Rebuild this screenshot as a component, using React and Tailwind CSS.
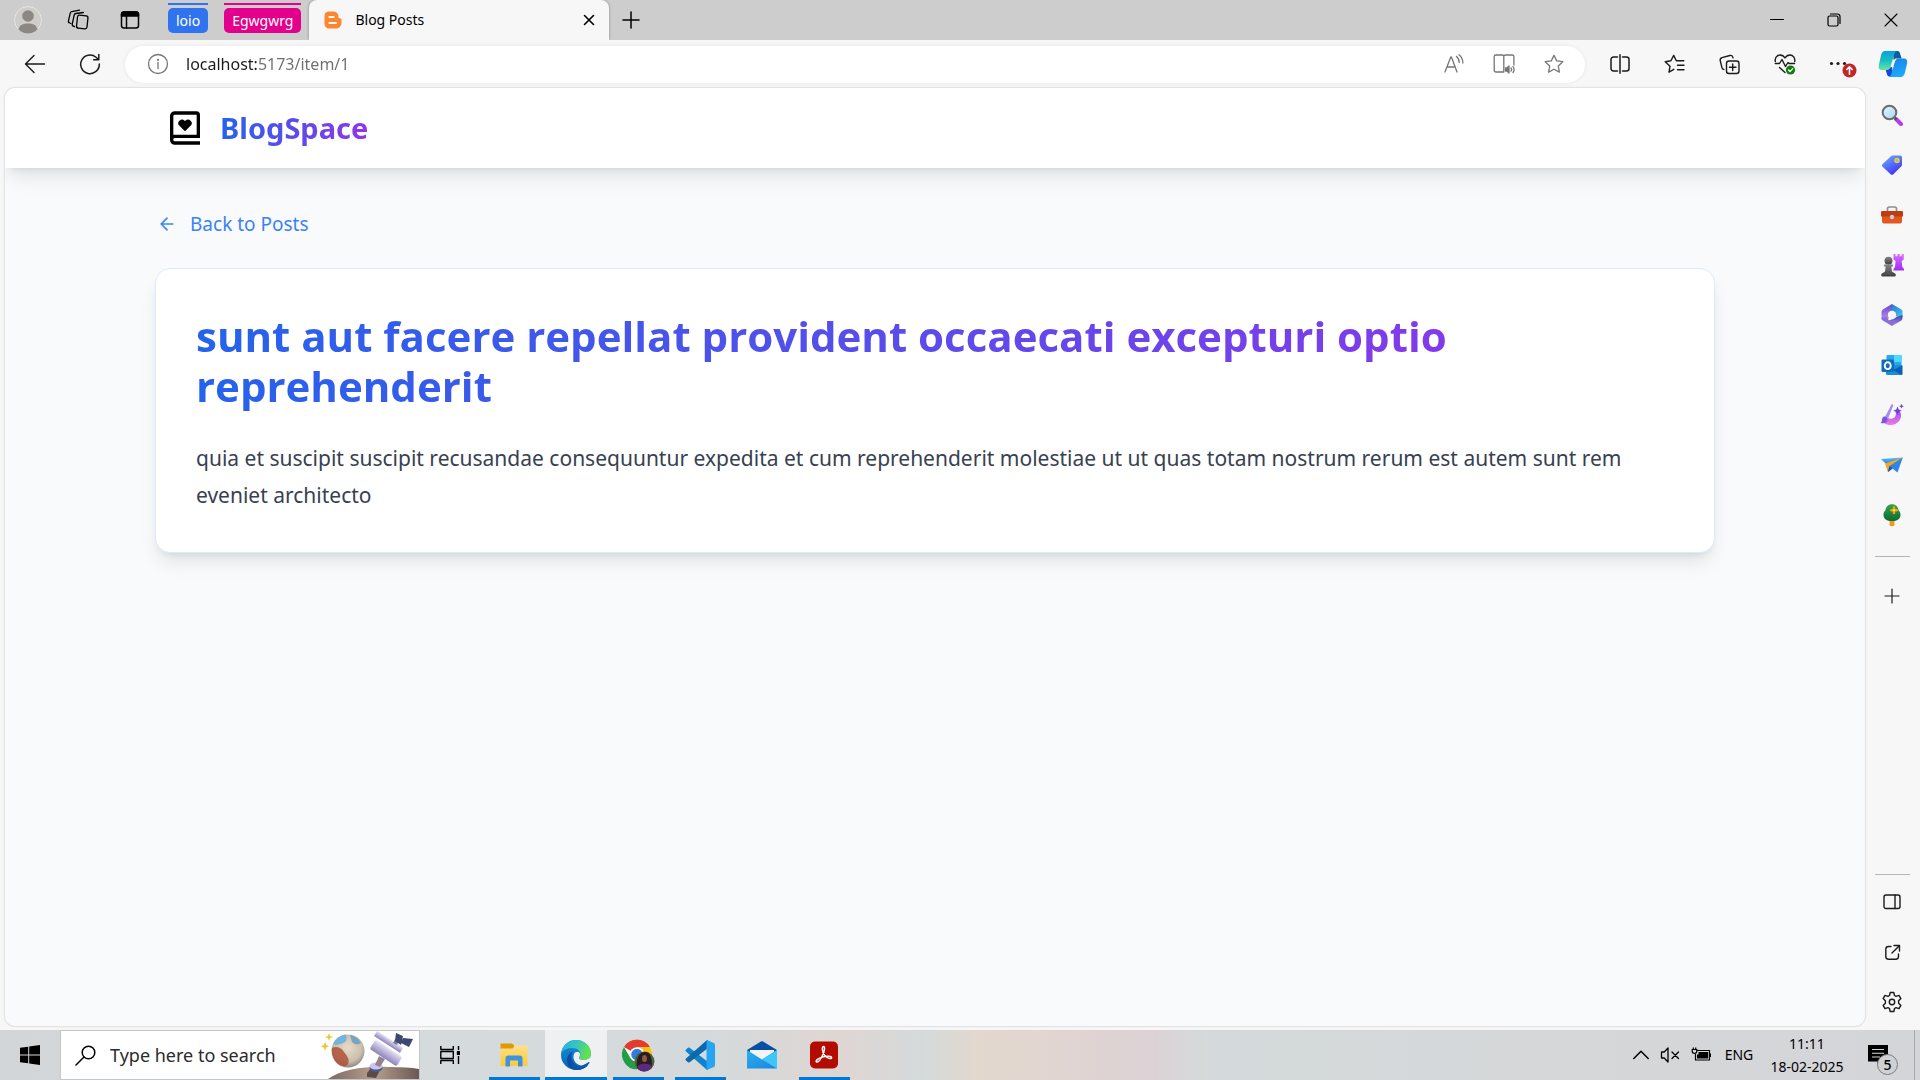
import React from 'react';
import { BiBookHeart } from 'react-icons/bi';

const label = "font-['Noto_Sans','Open_Sans',sans-serif]";

function Line({ size = 20, sw = 1.3, vb = 20, className = '', children }) {
  return (
    <svg
      width={size}
      height={size}
      viewBox={`0 0 ${vb} ${vb}`}
      fill="none"
      stroke="currentColor"
      strokeWidth={sw}
      strokeLinecap="round"
      strokeLinejoin="round"
      className={className}
      aria-hidden="true"
    >
      {children}
    </svg>
  );
}

function Art({ size = 22, vb = 22, children }) {
  return (
    <svg width={size} height={size} viewBox={`0 0 ${vb} ${vb}`} aria-hidden="true">
      {children}
    </svg>
  );
}

function Gradient({ id, from, to, mid, x2 = 1, y2 = 1 }) {
  return (
    <linearGradient id={id} x1="0" y1="0" x2={x2} y2={y2}>
      <stop offset="0" stopColor={from} />
      {mid && <stop offset="0.5" stopColor={mid} />}
      <stop offset="1" stopColor={to} />
    </linearGradient>
  );
}

/* ---------- tab strip ---------- */

function TabGroup({ name, chip, line }) {
  return (
    <button type="button" className="flex flex-col items-stretch gap-[3px] pt-[3px]">
      <span className={`h-[2px] ${line}`} />
      <span className={`flex h-[25px] items-center rounded-[5px] px-2 text-[14px] leading-5 text-white ${chip}`}>
        {name}
      </span>
    </button>
  );
}

function TabStrip() {
  return (
    <header className="flex h-10 shrink-0 bg-[#cdcdcd] text-black">
      <button type="button" aria-label="Profile" className="flex w-14 items-center justify-center">
        <Art size={28} vb={28}>
          <circle cx="14" cy="14" r="13.4" fill="#cfcdc9" stroke="#e6e4e1" strokeWidth="1" />
          <circle cx="14" cy="10" r="5.8" fill="#8b8782" />
          <path d="M4.5 23.5C5.5 18.8 9 17.4 14 17.4s8.500 1.400 9.500 6.100A13 13 0 0 1 14 27.500 13 13 0 0 1 4.500 23.500z" fill="#8b8782" />
        </Art>
      </button>
      <button type="button" aria-label="Workspaces" className="flex w-11 items-center justify-center">
        <Line size={22} vb={22}>
          <rect x="10" y="6.500" width="10.500" height="13" rx="2" transform="rotate(6 15 13)" />
          <path d="M7.500 17.500l-.8-.2a2 2 0 0 1-1.400-2.400L7.200 6a2 2 0 0 1 1.700-1.500l7.500-1" />
          <path d="M4 14.500l-1.200-.5a2 2 0 0 1-1.300-2.400L3.200 4.300A2 2 0 0 1 4.800 2.700l7.700-1.500" />
        </Line>
      </button>
      <button type="button" aria-label="Tab actions" className="flex w-[60px] items-center justify-center">
        <Line size={20} sw={1.5}>
          <rect x="1.500" y="2" width="17" height="16" rx="2.500" />
          <path d="M1.500 4.500A2.500 2.500 0 0 1 4 2h12a2.500 2.500 0 0 1 2.500 2.500V6h-17z" fill="currentColor" />
          <path d="M6.500 6v12" />
        </Line>
      </button>
      <div className="ml-2 flex items-start gap-4">
        <TabGroup name="loio" chip="bg-[#2f73ee]" line="bg-[#2f73ee]" />
        <TabGroup name="Egwgwrg" chip="bg-[#e3008c]" line="bg-[#e3008c]" />
      </div>
      <div role="tab" aria-selected="true" className="ml-2 flex w-[300px] items-center rounded-t-[8px] bg-[#f7f7f7] pl-[14px] pr-[5px] shadow-[0_0_3px_rgb(0_0_0/0.35)] [clip-path:inset(0_-4px_0_-4px)]">
        <Art size={20} vb={20}>
          <path d="M5.500 1.500h5a5 5 0 0 1 5 5v.7c0 .6.500 1 1 1h.5c.8 0 1.500.7 1.500 1.500V13a5.500 5.500 0 0 1-5.500 5.500H6A4.500 4.500 0 0 1 1.500 14V6a4.500 4.500 0 0 1 4-4.500z" fill="#ff8631" />
          <path d="M6.500 7h4M6.500 13h6.500" stroke="#fff" strokeWidth="2.200" strokeLinecap="round" />
        </Art>
        <span className="ml-[12px] grow text-[14px] leading-5">Blog Posts</span>
        <button type="button" aria-label="Close tab" className="flex h-8 w-[30px] items-center justify-center">
          <Line size={12} vb={12} sw={1.600}><path d="M1.500 1.500l9 9M10.500 1.500l-9 9" /></Line>
        </button>
      </div>
      <button type="button" aria-label="New tab" className="flex w-[43px] items-center justify-center">
        <Line size={18} vb={18} sw={1.500}><path d="M9 1v16M1 9h16" /></Line>
      </button>
      <div className="ml-auto flex">
        <button type="button" aria-label="Minimize" className="flex w-[57px] items-center justify-center">
          <Line size={14} vb={14} sw={1}><path d="M.5 6.500h13" /></Line>
        </button>
        <button type="button" aria-label="Restore" className="flex w-[57px] items-center justify-center">
          <Line size={14} vb={14} sw={1.200}>
            <rect x="1" y="3" width="10" height="10" rx="1.500" />
            <path d="M3.500 1h7A2.500 2.500 0 0 1 13 3.500v7" />
          </Line>
        </button>
        <button type="button" aria-label="Close" className="flex w-[58px] items-center justify-center">
          <Line size={14} vb={14} sw={1.100}><path d="M1 1l12 12M13 1L1 13" /></Line>
        </button>
      </div>
    </header>
  );
}

/* ---------- address bar ---------- */

const starPath = 'M10 1.300l2.700 5.600 6.100.800-4.500 4.300 1.100 6.100L10 15.200l-5.400 2.900 1.100-6.100L1.200 7.700l6.100-.800z';

function ToolButton({ name, wide, children }) {
  return (
    <button
      type="button"
      aria-label={name}
      className={`flex h-9 shrink-0 items-center justify-center ${wide ? 'w-[55px]' : 'w-[50px]'}`}
    >
      {children}
    </button>
  );
}

function Toolbar() {
  return (
    <nav aria-label="Browser toolbar" className="flex h-12 shrink-0 items-center bg-[#f7f7f7] pl-[7px] text-[#1b1b1b]">
      <ToolButton name="Back" wide>
        <Line size={22} vb={22} sw={1.400}><path d="M20.500 11H1.500M10 2.500L1.500 11l8.500 8.500" /></Line>
      </ToolButton>
      <ToolButton name="Reload" wide>
        <Line size={22} vb={22} sw={1.500}><path d="M20.300 11A9.300 9.300 0 1 1 17 4.200L19.500 6.500M19.800 1.500v5.200h-5.200" /></Line>
      </ToolButton>
      <div className="ml-2 mr-[7px] flex h-[37px] grow items-center rounded-full bg-white pl-[22px] pr-[6px] text-[#767676] shadow-[0_0_4px_rgb(0_0_0/0.07)]">
        <Line size={22} vb={22} sw={1.300} className="shrink-0">
          <circle cx="11" cy="11" r="9.500" />
          <path d="M11 9.500v6" />
          <circle cx="11" cy="6.800" r=".5" fill="currentColor" />
        </Line>
        <input
          type="text"
          aria-label="Address"
          defaultValue="localhost:5173/item/1"
          className="ml-[17px] min-w-0 grow bg-[linear-gradient(90deg,#1b1b1b_72px,#6e6e6e_72px)] bg-clip-text text-[16px] leading-6 text-transparent outline-none"
        />
        <ToolButton name="Read aloud">
          <Line size={20}>
            <path d="M1 18L6.800 3h.6L13 18M3 13h8.200" />
            <path d="M12.500 2.500c1.700 1.400 2.700 3.500 2.700 6M15 .8c2.300 1.900 3.900 5 3.900 8.200" />
          </Line>
        </ToolButton>
        <ToolButton name="Immersive reader">
          <Line size={22} vb={22}>
            <path d="M10.500 19H3a1.800 1.800 0 0 1-1.800-1.800V3.500A1.500 1.500 0 0 1 2.700 2h6.500c.9 0 1.600.8 1.600 1.600V19M10.800 3.600c0-.9.700-1.600 1.600-1.600h7a1.500 1.500 0 0 1 1.500 1.500V12" />
            <path d="M12.500 15h1.500l2-2v7l-2-2h-1.500z" fill="currentColor" />
            <path d="M18 15c.6.800.6 2.300 0 3M20 13.500c1.200 1.700 1.200 4.500 0 6" />
          </Line>
        </ToolButton>
        <ToolButton name="Favorite"><Line size={20}><path d={starPath} /></Line></ToolButton>
      </div>
      <ToolButton name="Split screen" wide>
        <Line size={20} sw={1.500}>
          <path d="M7.500 17H3.500A2.500 2.500 0 0 1 1 14.500v-9A2.500 2.500 0 0 1 3.500 3h4M12.500 3h4A2.500 2.500 0 0 1 19 5.500v9a2.500 2.500 0 0 1-2.500 2.500h-4M10 .8v18.400" />
        </Line>
      </ToolButton>
      <ToolButton name="Favorites" wide>
        <Line size={21} vb={21} sw={1.400}>
          <path d="M9.800 15.300L5 18.200l1-6L1.200 7.700l5.700-.9L9.700 1.400l2.600 5.300h7.500M13.500 11.300h6.500M13.500 15.700h6.500" />
        </Line>
      </ToolButton>
      <ToolButton name="Collections" wide>
        <Line size={21} vb={21} sw={1.400}>
          <rect x="7.500" y="7" width="12.500" height="12.500" rx="2.500" />
          <path d="M13.700 10v6.500M10.500 13.200H17M4.900 15.500c-1 0-1.700-.7-1.900-1.600L1.200 6.500C1 5.200 1.700 4 2.900 3.700l8-2.200c1.300-.3 2.400.2 2.800 1.400l.3 1" />
        </Line>
      </ToolButton>
      <ToolButton name="Browser essentials" wide>
        <svg width="22" height="22" viewBox="0 0 22 22" fill="none" stroke="currentColor" strokeWidth="1.400" strokeLinecap="round" strokeLinejoin="round" aria-hidden="true">
          <path d="M1.300 8.500C.7 4.800 3 2 6 2c2.200 0 3.900 1.200 5 3 1.100-1.800 2.800-3 5-3 3 0 5.300 2.800 4.700 6.500M1.300 10.500h4.200L8 6.500l3.500 7 2.500-4 1 1h5.500M5.500 14.500l5.500 5" />
          <circle cx="16.500" cy="17" r="4.600" fill="#107c10" stroke="none" />
          <path d="M14.500 17l1.500 1.500 2.700-2.900" stroke="#fff" strokeWidth="1.300" />
        </svg>
      </ToolButton>
      <ToolButton name="Settings and more" wide>
        <svg width="34" height="28" viewBox="0 0 34 28" aria-hidden="true">
          <circle cx="8.500" cy="13.500" r="1.600" fill="#1b1b1b" />
          <circle cx="15" cy="13.500" r="1.600" fill="#1b1b1b" />
          <circle cx="21.500" cy="13.500" r="1.600" fill="#1b1b1b" />
          <circle cx="26.500" cy="20.500" r="7" fill="#c42424" />
          <path d="M26.500 24.300v-7M23.800 19.500l2.700-2.700 2.700 2.700" stroke="#fff" strokeWidth="1.600" fill="none" strokeLinecap="round" strokeLinejoin="round" />
        </svg>
      </ToolButton>
      <button type="button" aria-label="Copilot" className="flex h-9 w-[53px] items-center justify-center pr-[2px]">
        <svg width="30" height="28" viewBox="0 0 30 28" aria-hidden="true">
          <defs>
            <Gradient id="cpA" from="#08a0dc" mid="#17bfc4" to="#6fe3a0" x2={0} />
            <Gradient id="cpB" from="#1b7fe8" to="#1aaafb" x2={0.3} />
          </defs>
          <path d="M15 1h4.500c1.300 0 2 .8 2.400 2l1.700 5.500h-6L15.500 10z" fill="#0c5f9e" />
          <path d="M9.500 18l4.500-1 1.500 9.700H12c-1.700 0-2.500-.9-2.900-2.200L7.500 19.500z" fill="#1746d8" />
          <path d="M7 1h12c-1.800.4-2.600 2.300-3.200 4.500L13 15.500c-.7 2.600-1.600 4.600-4.500 4.600H4C1.200 20.100.2 18 .8 15.200L3 5.500C3.700 2.600 4.800 1 7 1z" fill="url(#cpA)" />
          <path d="M22.600 27h-12c1.800-.4 2.600-2.300 3.200-4.500l2.700-9.500c.8-2.700 1.700-4.600 4.600-4.600h5c2.600 0 3.600 2.100 3 4.900L27 22.500c-.8 2.900-2 4.500-4.400 4.500z" fill="url(#cpB)" />
        </svg>
      </button>
    </nav>
  );
}

/* ---------- page ---------- */

function BlogPage() {
  return (
    <div className="mb-1 ml-[5px] min-w-0 grow overflow-hidden rounded-[10px] bg-[#f9fafc] shadow-[0_0_0_1px_#e3e3e3,0_0_3px_rgb(0_0_0/0.12)]">
      <nav aria-label="Site" className="bg-white shadow-[0_12px_19px_-4px_rgb(0_0_0/0.1),0_5px_8px_-5px_rgb(0_0_0/0.1)]">
        <div className="mx-auto flex h-20 max-w-[1600px] items-center gap-[15px] px-[30px]">
          <BiBookHeart size={40} className="text-black" aria-hidden="true" />
          <a href="/" className="bg-[linear-gradient(to_right,#2563eb,#9333ea)] bg-clip-text text-[29px] leading-10 font-bold text-transparent">
            BlogSpace
          </a>
        </div>
      </nav>
      <main className="mx-auto max-w-[1600px] px-5 pt-10">
        <a href="/" className="inline-flex h-8 items-center gap-[11px] text-[19px] leading-8 text-[#3b82f6]">
          <span className="flex w-6 justify-center">
            <Line size={20} vb={24} sw={2}><path d="M19 12H5M12 19l-7-7 7-7" /></Line>
          </span>
          Back to Posts
        </a>
        <article className="mt-7 rounded-[15px] border border-[#dbeafe] bg-white px-10 pt-[42px] pb-[38px] shadow-[0_12px_19px_-4px_rgb(0_0_0/0.1),0_5px_8px_-5px_rgb(0_0_0/0.1)]">
          <h1 className="bg-[linear-gradient(to_right,#2563eb,#9333ea)] bg-clip-text font-['Open_Sans',sans-serif] text-[42px] leading-[50px] font-bold text-transparent">
            sunt aut facere repellat provident occaecati excepturi optio reprehenderit
          </h1>
          <p className="mt-[29px] text-[21px] leading-[37px] text-[#374151]">
            quia et suscipit suscipit recusandae consequuntur expedita et cum reprehenderit molestiae ut ut quas totam nostrum rerum est autem sunt rem eveniet architecto
          </p>
        </article>
      </main>
    </div>
  );
}

/* ---------- sidebar ---------- */

function SideButton({ name, children }) {
  return (
    <button type="button" aria-label={name} className="flex h-[50px] w-full items-center justify-center">
      {children}
    </button>
  );
}

function Sidebar() {
  return (
    <aside className="flex w-[55px] shrink-0 flex-col items-center pt-[2px] pr-px pb-[3px] text-[#1b1b1b]">
      <SideButton name="Search">
        <Art>
          <defs><Gradient id="lens" from="#e8f6ff" to="#9fd6f5" /></defs>
          <path d="M15 15l5 5" stroke="#b93bf0" strokeWidth="4" strokeLinecap="round" />
          <path d="M13 13l2.500 2.500" stroke="#555" strokeWidth="2.500" />
          <circle cx="8.500" cy="8.500" r="6.800" fill="url(#lens)" stroke="#6c6c6c" strokeWidth="2" />
        </Art>
      </SideButton>
      <SideButton name="Shopping">
        <Art>
          <defs><Gradient id="tag" from="#6ab5ff" to="#4334f5" x2={0.600} /></defs>
          <path d="M11.500 1.500h7.500a2 2 0 0 1 2 2v7.300c0 .6-.2 1-.6 1.400l-8 8c-.8.800-2 .8-2.800 0L1.600 12.700c-.8-.8-.8-2 0-2.800L10 2.200c.4-.4.9-.7 1.500-.7z" fill="url(#tag)" />
          <circle cx="16" cy="6.500" r="2" fill="#8fb3ff" stroke="#f3cf25" strokeWidth="1.500" />
        </Art>
      </SideButton>
      <SideButton name="Tools">
        <Art size={24} vb={24}>
          <path d="M7.500 8V5.800c0-1.100.8-1.800 1.800-1.800h5.400c1 0 1.800.7 1.800 1.800V8" fill="none" stroke="#8d8d8d" strokeWidth="1.700" />
          <path d="M2 13h20v5.500c0 1.100-.9 2-2 2H4a2 2 0 0 1-2-2z" fill="#e2561f" />
          <path d="M2 8h20a1 1 0 0 1 1 1v4.500H1V9a1 1 0 0 1 1-1z" fill="#bf3c12" />
          <circle cx="12" cy="14" r="2.200" fill="#c9cdd2" />
        </Art>
      </SideButton>
      <SideButton name="Games">
        <Art size={24} vb={24}>
          <defs>
            <Gradient id="pawn" from="#858585" to="#3f3f3f" x2={0} />
            <Gradient id="rook" from="#d96cff" to="#a02cf2" x2={0} />
          </defs>
          <path d="M13.500 1h2v2.200h2V1h2.200v2.200h2V1h2v5.500l-2 1.500.6 6 1.700 2v1.500H13.500V16l1.500-2 .6-6-2.100-1.500z" fill="url(#rook)" />
          <circle cx="8.500" cy="7.700" r="4" fill="url(#pawn)" />
          <path d="M4 11.500h9v2h-1.700l.7 5 3.500 2.300c.7 1.400.2 2.700-1 2.700h-12c-1.200 0-1.700-1.300-1-2.700L5 18.500l.7-5H4z" fill="url(#pawn)" />
        </Art>
      </SideButton>
      <SideButton name="Microsoft 365">
        <Art size={24} vb={24}>
          <defs>
            <Gradient id="mA" from="#2c65c9" to="#3ccbf4" />
            <Gradient id="mB" from="#5a4ccf" to="#c58be8" x2={0} />
            <Gradient id="mC" from="#3a3fb6" to="#b48be4" x2={0} />
          </defs>
          <path d="M12 1l9 5.200c1 .6 1.500 1.500 1.500 2.700V14l-6.500-.5L12 8 7.500 8.500z" fill="url(#mA)" />
          <path d="M12 1L3.200 6.200C2.200 6.800 1.500 7.700 1.500 9v7.500l6 .5 2-3-1-3.500L12 6z" fill="url(#mB)" />
          <path d="M22.500 12v3c0 1.200-.5 2.100-1.500 2.700L12 23l-3-5.500 3.500-1.500 4-2z" fill="url(#mC)" />
          <path d="M1.500 14.500v.5c0 1.200.7 2.100 1.700 2.700L12 23l5-5.500H9L6.500 14z" fill="#8a6fd8" />
          <circle cx="12" cy="12" r="4.200" fill="#f7f7f7" />
        </Art>
      </SideButton>
      <SideButton name="Outlook">
        <Art>
          <rect x="5.500" y="1" width="15" height="13" rx="1" fill="#28a8ea" />
          <path d="M13 1h7a1 1 0 0 1 1 1v6h-8z" fill="#50d9ff" />
          <path d="M5 11h16v9a1 1 0 0 1-1 1H6.500A1.500 1.500 0 0 1 5 19.500z" fill="#1490df" />
          <path d="M21.500 11.500V20a1 1 0 0 1-1 1L12 16z" fill="#0a5fb0" />
          <rect x="0.500" y="5.500" width="12.500" height="12.500" rx="1.300" fill="#0f6cbd" />
          <ellipse cx="6.750" cy="11.700" rx="3" ry="3.400" fill="none" stroke="#fff" strokeWidth="1.900" />
        </Art>
      </SideButton>
      <SideButton name="Designer">
        <Art size={24} vb={24}>
          <defs><Gradient id="des" from="#9d4bf0" to="#ef7be8" x2={0} /></defs>
          <path d="M15.500 9.500l4-2c2 3.200 2.200 7-.2 10.300-3.600 4.600-10.300 5.600-15.300 2.200l4-5c2.300 1.300 5 1 6.800-1 1.100-1.300 1.500-3 .7-4.500z" fill="url(#des)" />
          <path d="M11.500 1.500c1-.6 2 .2 1.600 1.400L8 15.500l-3-1.500z" fill="#a58bf5" />
          <path d="M4.300 13.500c2.200 0 3.500 1.500 3.200 3.500-.3 2.500-3 4-7 3 1.500-1 1.300-2 1.500-3.500.2-1.700 1-2.800 2.300-3z" fill="#7a55e6" />
          <path d="M17.500 3.500l1.200 3 3 1.200-3 1.200-1.200 3-1.200-3-3-1.200 3-1.200zM21.500.8l.7 1.700 1.700.7-1.700.7-.7 1.700-.7-1.700-1.700-.7 1.700-.7z" fill="#6a3fe0" />
        </Art>
      </SideButton>
      <SideButton name="Drop">
        <Art size={24} vb={24}>
          <defs><Gradient id="plane" from="#4fc0f5" to="#2673e0" x2={0} /></defs>
          <path d="M1 6L22.800 4.500 14 13 6 11z" fill="url(#plane)" />
          <path d="M22.800 4.500L17.500 19.500 12.500 15.500 8 19 6.500 12z" fill="#2f83ea" />
          <path d="M22.800 4.500L5 10.500 8 19l1.500-6z" fill="#f5a623" />
          <path d="M8 19l1.500-6 3 2.500z" fill="#1b4fb0" />
        </Art>
      </SideButton>
      <SideButton name="Tree">
        <Art size={24} vb={24}>
          <defs><Gradient id="tree" from="#33a452" to="#0c6b33" x2={0} /></defs>
          <path d="M9.500 17h5v5c0 .8-1 1.200-2.500 1.200S9.500 22.800 9.500 22z" fill="#f09a1a" />
          <path d="M12 1.200c4 0 6 2.500 6.500 6 1.500 1.300 2.200 3.200 2 5.300-.3 3.500-3 5.500-8.500 5.500s-8.200-2-8.500-5.500c-.2-2.100.5-4 2-5.300.5-3.500 2.500-6 6.500-6z" fill="url(#tree)" />
          <path d="M14 4.500v5.500M11.300 7.200h5.500" stroke="#f5a800" strokeWidth="2.400" strokeLinecap="round" />
          <circle cx="14" cy="7.200" r="1" fill="#fff0a0" />
        </Art>
      </SideButton>
      <hr className="mt-4 w-[35px] border-t border-[#b5b5b5]" />
      <div className="mt-[14px] w-full">
        <SideButton name="Customize">
          <Line size={16} vb={16} sw={1.200}><path d="M8 1v14M1 8h14" /></Line>
        </SideButton>
      </div>
      <hr className="mt-auto w-[35px] border-t border-[#b5b5b5]" />
      <div className="mt-[2px] w-full">
        <SideButton name="Hide sidebar">
          <Line size={18} vb={18} sw={1.400}><rect x="1" y="2" width="16" height="13.500" rx="2" /><path d="M12 2v13.500" /></Line>
        </SideButton>
        <SideButton name="Open link">
          <Line size={17} vb={17} sw={1.400}>
            <path d="M7 2.500H4.500A2.700 2.700 0 0 0 1.800 5.200v7.300a2.700 2.700 0 0 0 2.700 2.700h7.300a2.700 2.700 0 0 0 2.700-2.700V10M10 1.500h5.500V7M15.300 1.700L8 9" />
          </Line>
        </SideButton>
        <SideButton name="Sidebar settings">
          <Line size={22} vb={22} sw={1.400}>
            <path d="M9.200 1.500h3.600l.7 3 1.500.9 3-1 1.900 3.200-2.300 2.200v2.400l2.300 2.200-1.900 3.200-3-1-1.500.9-.7 3H9.200l-.7-3-1.500-.9-3 1-1.900-3.200 2.300-2.200V9.800L2.100 7.600 4 4.400l3 1 1.500-.9z" />
            <circle cx="11" cy="11" r="2.700" />
          </Line>
        </SideButton>
      </div>
    </aside>
  );
}

/* ---------- taskbar ---------- */

function TaskButton({ name, running, active, children }) {
  return (
    <button
      type="button"
      aria-label={name}
      className={`flex h-full w-[62px] flex-col items-center ${active ? 'bg-[#eef0f1]' : ''}`}
    >
      <span className="flex grow items-center pt-[3px]">{children}</span>
      <span className={`h-[3px] ${active ? 'w-full' : 'w-[51px]'} ${running ? 'bg-[#0078d7]' : ''}`} />
    </button>
  );
}

function SearchArt() {
  return (
    <svg width="98" height="48" viewBox="0 0 98 48" className="shrink-0" aria-hidden="true">
      <defs>
        <Gradient id="hill" from="#7b6860" mid="#b59f8d" to="#6a5953" y2={0} />
        <radialGradient id="planet" cx="0.5" cy="0.4" r="0.6">
          <stop offset="0" stopColor="#e6dcc8" />
          <stop offset="0.7" stopColor="#c9bfae" />
          <stop offset="1" stopColor="#8e887e" />
        </radialGradient>
        <Gradient id="tube" from="#e6e2f8" to="#8c83b8" x2={0} />
      </defs>
      <path d="M7 48c14-10 38-13 60-12 13 .2 23 .5 31 2v10z" fill="url(#hill)" />
      <circle cx="27" cy="20" r="16.500" fill="url(#planet)" />
      <path d="M12 13c2-5 7-9 13-9.500 1.500 5 0 8-4 9-3 1-6 2-9 .5z" fill="#72b4dc" />
      <path d="M29 4c5 .5 9 4 11 8-3 2-7 2-9-1z" fill="#5f9dc6" opacity="0.8" />
      <path d="M11 17c4-2 9-1 12 4 3 4 6 7 4 12-2 3-6 2.500-9 .5-4-2.500-8-9-7-16.500z" fill="#b0513b" opacity="0.850" />
      <path d="M8 2l1 3 3 1-3 1-1 3-1-3-3-1 3-1zM4 11l1.200 3 3 1.200-3 1.200L4 19.500l-1.200-3.100-3-1.200 3-1.200z" fill="#f2c230" />
      <path d="M46 42l5-6 8 3-4 8-9-1z" fill="#5c4a4a" />
      <ellipse cx="55" cy="37" rx="6.500" ry="4" fill="#4c5a94" />
      <ellipse cx="55" cy="35" rx="6.500" ry="3.500" fill="#c9c8ea" />
      <path d="M54 34l4-9 6 3-5 8z" fill="#94838f" />
      <rect x="52" y="7.500" width="31" height="6" rx="1" transform="rotate(33 67 11)" fill="url(#tube)" />
      <rect x="49" y="16.500" width="32" height="11" rx="2" transform="rotate(33 65 22)" fill="url(#tube)" />
      <path d="M72 12l4-7 3 2-3 7z" fill="#80788f" />
      <path d="M75 2l7 3-2 9-6-4zM82 7l10 1-4 8-8-4z" fill="#3e4674" />
    </svg>
  );
}

function Taskbar() {
  return (
    <footer className="flex h-[50px] shrink-0 items-center bg-[linear-gradient(90deg,#d3d6d9_0%,#d5dbdc_28%,#d4dadb_37%,#dfd6d3_44%,#d4dadb_48%,#e3d8ce_51%,#ded3d3_58%,#ddd2d6_60%,#d4dadb_63%,#d5d7d9_80%,#d4d5d8_100%)] text-black">
      <button type="button" aria-label="Start" className="flex h-full w-[60px] shrink-0 items-center justify-center">
        <Art size={20} vb={20}>
          <path d="M0 2.800l8.200-1.100v7.800H0zM9.200 1.500L20 0v9.500H9.200zM0 10.500h8.200v7.800L0 17.200zM9.200 10.500H20V20L9.200 18.500z" />
        </Art>
      </button>
      <label className="flex h-full w-[360px] shrink-0 items-center overflow-hidden border border-[#c3c5c7] bg-white pl-[14px]">
        <Line size={21} vb={21} sw={1.500} className="shrink-0"><circle cx="13.500" cy="7.500" r="6.300" /><path d="M9 12L1 20" /></Line>
        <input
          type="text"
          aria-label="Search"
          placeholder="Type here to search"
          className="ml-[14px] min-w-0 grow bg-transparent text-[18px] leading-6 outline-none placeholder:text-[#2b2b2b] placeholder:opacity-100"
        />
        <SearchArt />
      </label>
      <button type="button" aria-label="Task view" className="flex h-full w-[60px] items-center justify-center">
        <Line size={20} sw={1.400}>
          <path d="M.8 1v3.500h12.500V1M.8 19v-3.500h12.500V19M.8 6.500h12.500v7H.8zM18.500 1v4M18.500 11v8" strokeLinecap="butt" />
          <rect x="17.500" y="6.700" width="2" height="2.500" fill="currentColor" />
        </Line>
      </button>
      <div className="ml-[3px] flex h-full">
        <TaskButton name="File Explorer" running>
          <Art size={30} vb={30}>
            <defs><Gradient id="fold" from="#ffdf82" to="#fbc93c" x2={0} /></defs>
            <path d="M1.500 3.500h11c1.300 0 1.800 1 2.500 2v4H1.500z" fill="#dd9a06" />
            <path d="M1.500 8.500h12l2.500-2.800h12.500V26h-27z" fill="url(#fold)" />
            <path d="M6.500 26.500v-8a3 3 0 0 1 3-3h11a3 3 0 0 1 3 3v8H19v-6h-8v6z" fill="#3f93dc" />
          </Art>
        </TaskButton>
        <TaskButton name="Microsoft Edge" running active>
          <Art size={30} vb={30}>
            <defs>
              <Gradient id="edA" from="#2aa8e0" mid="#33c6c4" to="#66e04f" y2={0.400} />
              <Gradient id="edB" from="#1693dc" to="#0a60b8" x2={0} />
            </defs>
            <circle cx="15" cy="15" r="15" fill="url(#edB)" />
            <path d="M.3 12.500C1.500 5.500 7.500 0 15 0c8.500 0 15 6 15 13 0 4.500-3.400 7-7.200 7-2.600 0-4.600-.8-4.600-2 0-.9 1.200-1.300 1.200-3.800 0-3.400-3.200-6.200-8-6.200-5 0-9 2-11.100 4.500z" fill="url(#edA)" />
            <path d="M11.500 11.500c-3 5.500-.5 13 6 15 4 1.300 8 .3 10.500-2.500C25 28 20.500 30 15.500 30c-7 0-10-6-9.500-10.500.4-3.600 2.500-6.700 5.500-8z" fill="#0d4c9e" />
            <path d="M18.200 17.200c-.6 1.300 1 2.800 4.600 2.800 3.300 0 6.300-1.800 7-5l.2 8-2 1.500c-3 1.800-7 2-10.500.2-4.500-2.300-6-7-4.500-10.500 1-2.300 3.500-3 5.300-1.800 1.300 1 1.200 3-.1 4.800z" fill="#eef0f1" />
            <path d="M27.800 22c.5-.3 1 .2.700.8-2.500 4.400-7.200 7.200-12.500 7.200-4.500 0-7-4-6-9 2 5 8.500 7.500 17.800 1z" fill="#1056a6" />
          </Art>
        </TaskButton>
        <TaskButton name="Google Chrome" running>
          <Art size={33} vb={33}>
            <circle cx="15" cy="15.500" r="15" fill="#fff" />
            <path d="M15 15.500L2 8a15 15 0 0 1 26 0z" fill="#e33b2e" />
            <path d="M15 15.500V8h13a15 15 0 0 1-13 22.500l6.500-11.200z" fill="#fbc116" />
            <path d="M2 8l6.500 11.200L15 23l0 7.500A15 15 0 0 1 2 8z" fill="#259b48" />
            <circle cx="15" cy="15.500" r="7.300" fill="#fff" />
            <circle cx="15" cy="15.500" r="5.700" fill="#2f7de1" />
            <circle cx="22.500" cy="22.500" r="10" fill="#4c6045" />
            <path d="M15 29c-1-8 1-16 8-16 6 0 7 8 7 14-3 6-11 7-15 2z" fill="#2b1d1c" />
            <path d="M15 28c2-4 12-4 15-1-2 6-11 8-15 1z" fill="#5b2a80" />
            <ellipse cx="22.500" cy="19.500" rx="2.500" ry="3.500" fill="#8a5a4a" />
          </Art>
        </TaskButton>
        <TaskButton name="Visual Studio Code" running>
          <Art size={30} vb={30}>
            <path d="M1 9.500l2-1.800c.5-.4 1.100-.4 1.600 0L23 22v7L22 30 1 11.500c-.6-.6-.6-1.400 0-2z" fill="#1183cc" />
            <path d="M1 20.500l2 1.800c.5.400 1.100.4 1.600 0L23 8V1L22 0 1 18.500c-.6.600-.6 1.400 0 2z" fill="#0c69aa" />
            <path d="M22 0l6.800 3c.8.400 1.200 1 1.200 1.800v20.400c0 .8-.4 1.400-1.200 1.800L22 30c-.8-.2-.5-1-.5-1.500v-27c0-.5 0-1.300.5-1.500z" fill="#27a5f2" />
          </Art>
        </TaskButton>
        <TaskButton name="Mail">
          <Art size={30} vb={30}>
            <defs><Gradient id="mail" from="#29b0ee" to="#1a86dc" /></defs>
            <path d="M0 10L14 1.500c.7-.4 1.300-.4 2 0L30 10v3H0z" fill="#0a4fa3" />
            <path d="M3 10h24v10H3z" fill="#f3f3f5" />
            <path d="M0 10l15 9.500L30 10v18.500H0z" fill="url(#mail)" />
            <path d="M30 10v18.500L15 19.500z" fill="#3fc5f8" />
          </Art>
        </TaskButton>
        <TaskButton name="Adobe Acrobat" running>
          <Art size={28} vb={28}>
            <rect x="0" y="0.500" width="28" height="27" rx="5" fill="#b30b00" />
            <path d="M13.500 5.500c1.600 0 1.300 4-.7 8.300-1.900 4.200-4.600 7.700-6.200 7.200-1.500-.6.500-3.500 5.700-4.900 5-1.300 9.300-1 9.300.6 0 1.700-4.200 1-7.200-2.700-2.500-3.200-2.600-8.500-.9-8.500z" fill="none" stroke="#fff" strokeWidth="1.500" />
          </Art>
        </TaskButton>
      </div>
      <div className="ml-auto flex h-full items-center">
        <button type="button" aria-label="Show hidden icons" className="flex w-7 justify-center">
          <Line size={16} vb={16} sw={1.500}><path d="M.8 11.500L8 4.300l7.200 7.200" /></Line>
        </button>
        <button type="button" aria-label="Volume muted" className="flex w-[30px] justify-center">
          <Line size={20} sw={1.300}><path d="M1.500 7h2.700L8 3v14l-3.800-4H1.500zM12 7l6.500 6.500M18.500 7L12 13.500" /></Line>
        </button>
        <button type="button" aria-label="Battery charging" className="flex w-[32px] justify-center">
          <Art size={20} vb={20}>
            <path d="M6 5.500h12.500v9.500H4.500V9" fill="none" stroke="#000" strokeWidth="1.200" />
            <path d="M7.500 7h9.700v6.500H6V9.500h1.500zM18.500 8.500H20v3.500h-1.500z" />
            <path d="M1.200 4.500v1.500A2.500 2.500 0 0 0 3.500 8.500 2.500 2.500 0 0 0 5.800 6V4.500zM2.300 4.500V2.500M4.700 4.500V2.500" fill="none" stroke="#000" strokeWidth="1.200" />
          </Art>
        </button>
        <button type="button" className="w-[44px] text-center text-[14px] leading-5">ENG</button>
        <button type="button" className="flex w-[92px] flex-col items-center text-[14px] leading-[23px]">
          <span>11:11</span>
          <span>18-02-2025</span>
        </button>
        <button type="button" aria-label="Notifications" className="relative flex h-full w-[61px] items-center pl-[15px]">
          <Art size={20} vb={20}>
            <path d="M0 0h20v16.500h-7L9.500 20V16.500H0z" />
            <path d="M4 4.500h12M4 8.300h12M4 12h8" stroke="#d4d6d8" strokeWidth="1.100" />
          </Art>
          <span className="absolute top-[24px] left-[24px] flex size-[21px] items-center justify-center rounded-full border border-[#7b7b7b] bg-[#cfd1d3] text-[14px] leading-none font-medium">
            5
          </span>
        </button>
        <span className="h-full w-[6px] border-l border-[#a5a7a9]" />
      </div>
    </footer>
  );
}

export default function App() {
  return (
    <div className={`flex h-screen flex-col bg-[#f7f7f7] ${label}`}>
      <TabStrip />
      <Toolbar />
      <div className="flex min-h-0 grow">
        <BlogPage />
        <Sidebar />
      </div>
      <Taskbar />
    </div>
  );
}
